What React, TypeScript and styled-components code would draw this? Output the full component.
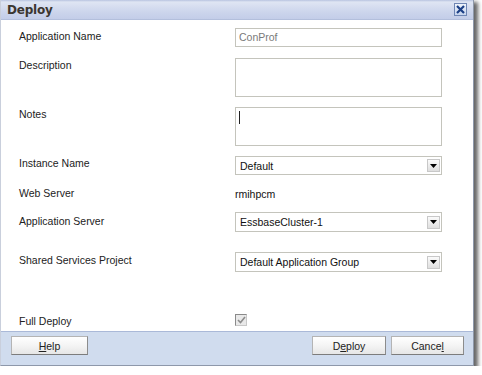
import React from "react";
import styled, { createGlobalStyle } from "styled-components";

const Global = createGlobalStyle`
  html, body { margin: 0; padding: 0; background: #ffffff; }
  body { font-family: "Liberation Sans", Arial, sans-serif; font-size: 10.5px; color: #222; }
  * { box-sizing: border-box; }
`;

const Dialog = styled.div`
  width: 474px;
  height: 366px;
  display: flex;
  flex-direction: column;
  background: #ffffff;
  border: 1px solid #8e98aa;
  border-left-color: #c9cfdc;
  border-top: none;
  box-shadow: 3px 3px 4px 1px rgba(0, 0, 0, 0.6);
`;

const TitleBar = styled.div`
  height: 20px;
  display: flex;
  align-items: center;
  justify-content: space-between;
  padding: 0 6px 0 6px;
  background: linear-gradient(to bottom, #b8c3e0 0px, #dfe5f3 2px, #ccd5ec 12px, #c3cde8 100%);
  border-bottom: 1px solid #b3bfdc;
`;

const Title = styled.span`
  font-family: "DejaVu Sans", "Liberation Sans", sans-serif;
  font-weight: bold;
  font-size: 12px;
  color: #3b3630;
  letter-spacing: -0.2px;
`;

const CloseButton = styled.div`
  width: 13px;
  height: 13px;
  border: 1px solid #6f86b4;
  background: linear-gradient(to bottom, #eef3fb, #c7d5ee);
  display: flex;
  align-items: center;
  justify-content: center;
`;

const Body = styled.div`
  flex: 1;
  padding: 8px 0 0 18px;
  display: flex;
  flex-direction: column;
`;

const Row = styled.div<{ $mt: number; $h: number }>`
  display: grid;
  grid-template-columns: 216px 207px;
  margin-top: ${(p) => p.$mt}px;
  height: ${(p) => p.$h}px;
`;

const Label = styled.div<{ $pt: number }>`
  padding-top: ${(p) => p.$pt}px;
  line-height: 13px;
  color: #222;
`;

const Field = styled.div<{ $muted?: boolean }>`
  height: 100%;
  border: 1px solid #c4c4bc;
  background: #fff;
  padding: 2px 3px;
  line-height: 13px;
  color: ${(p) => (p.$muted ? "#7a7a7a" : "#111")};
`;

const Caret = styled.span`
  display: inline-block;
  width: 1px;
  height: 13px;
  background: #222;
  margin-top: 1px;
`;

const Select = styled.div`
  height: 100%;
  border: 1px solid #c4c4bc;
  background: #fff;
  display: flex;
  align-items: center;
  justify-content: space-between;
  padding: 0 1px 0 4px;
  color: #111;
`;

const ArrowBox = styled.div`
  width: 13px;
  height: 13px;
  border: 1px solid #c8c8c8;
  background: linear-gradient(to bottom, #fbfbfb, #dedede);
  display: flex;
  align-items: center;
  justify-content: center;
`;

const PlainValue = styled.div`
  display: flex;
  align-items: center;
  color: #111;
`;

const CheckBox = styled.div`
  width: 12px;
  height: 12px;
  border: 1px solid #8a8a8a;
  border-right-color: #c8c8c8;
  border-bottom-color: #c8c8c8;
  background: #e9e9e9;
  display: flex;
  align-items: center;
  justify-content: center;
`;

const Footer = styled.div`
  height: 34px;
  background: #d0dcee;
  border-top: 1px solid #aab9d8;
  display: flex;
  align-items: flex-start;
  justify-content: space-between;
  padding: 4px 9px 0 10px;
`;

const ButtonGroup = styled.div`
  display: flex;
  gap: 5px;
`;

const Button = styled.div<{ $w: number }>`
  width: ${(p) => p.$w}px;
  height: 19px;
  border: 1px solid #b4b4b4;
  border-right-color: #8c8c8c;
  border-bottom-color: #7c7c7c;
  background: linear-gradient(to bottom, #ffffff, #f4f4f4 50%, #e6e6e6);
  display: flex;
  align-items: center;
  justify-content: center;
  color: #222;
`;

const U = styled.span`
  text-decoration: underline;
`;

const Arrow = () => (
  <ArrowBox>
    <svg width="7" height="4" viewBox="0 0 7 4">
      <path d="M0 0 H7 L3.5 4 Z" fill="#000" />
    </svg>
  </ArrowBox>
);

export default function App() {
  return (
    <>
      <Global />
      <Dialog>
        <TitleBar>
          <Title>Deploy</Title>
          <CloseButton>
            <svg width="9" height="9" viewBox="0 0 9 9">
              <path d="M1 1 L8 8 M8 1 L1 8" stroke="#1b3f86" strokeWidth="2.2" />
            </svg>
          </CloseButton>
        </TitleBar>
        <Body>
          <Row $mt={0} $h={19}>
            <Label $pt={2}>Application Name</Label>
            <Field $muted>ConProf</Field>
          </Row>
          <Row $mt={11} $h={39}>
            <Label $pt={1}>Description</Label>
            <Field />
          </Row>
          <Row $mt={10} $h={39}>
            <Label $pt={1}>Notes</Label>
            <Field>
              <Caret />
            </Field>
          </Row>
          <Row $mt={10} $h={19}>
            <Label $pt={1}>Instance Name</Label>
            <Select>
              Default
              <Arrow />
            </Select>
          </Row>
          <Row $mt={9} $h={19}>
            <Label $pt={3}>Web Server</Label>
            <PlainValue>rmihpcm</PlainValue>
          </Row>
          <Row $mt={9} $h={20}>
            <Label $pt={3}>Application Server</Label>
            <Select>
              EssbaseCluster-1
              <Arrow />
            </Select>
          </Row>
          <Row $mt={20} $h={20}>
            <Label $pt={2}>Shared Services Project</Label>
            <Select>
              Default Application Group
              <Arrow />
            </Select>
          </Row>
          <Row $mt={42} $h={13}>
            <Label $pt={1}>Full Deploy</Label>
            <CheckBox>
              <svg width="9" height="8" viewBox="0 0 9 8">
                <path d="M1 4 L3.5 6.5 L8 1" stroke="#8c8c8c" strokeWidth="1.6" fill="none" />
              </svg>
            </CheckBox>
          </Row>
        </Body>
        <Footer>
          <Button $w={77}>
            <span>
              <U>H</U>elp
            </span>
          </Button>
          <ButtonGroup>
            <Button $w={74}>
              <span>
                D<U>e</U>ploy
              </span>
            </Button>
            <Button $w={73}>
              <span>
                Cance<U>l</U>
              </span>
            </Button>
          </ButtonGroup>
        </Footer>
      </Dialog>
    </>
  );
}
